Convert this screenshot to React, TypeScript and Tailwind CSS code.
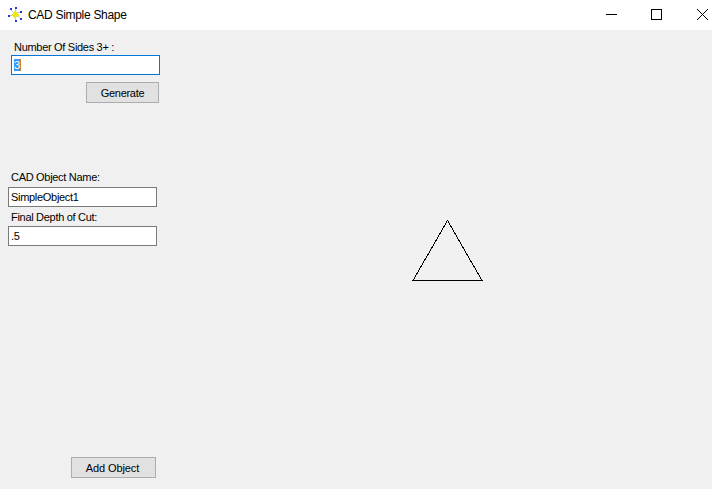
const Logo = () => (
  <svg width="16" height="16" viewBox="0 0 16 16" shapeRendering="crispEdges">
    <path d="M8 7 4 3M8 7l1-5M8 7l5-2M8 7 3 9M8 7l5 4M8 7l0 6" stroke="#c4c4d2" strokeWidth="1" />
    <rect x="6" y="5" width="5" height="5" fill="#e8e81a" />
    <rect x="7" y="4" width="2" height="7" fill="#e8e81a" />
    <rect x="5" y="7" width="7" height="2" fill="#e8e81a" />
    <rect x="3" y="1" width="2" height="2" fill="#2b35c9" />
    <rect x="8" y="0" width="2" height="2" fill="#2b35c9" />
    <rect x="13" y="4" width="2" height="2" fill="#2b35c9" />
    <rect x="1" y="8" width="2" height="2" fill="#2b35c9" />
    <rect x="13" y="11" width="2" height="2" fill="#2b35c9" />
    <rect x="8" y="13" width="2" height="2" fill="#2b35c9" />
  </svg>
);

const WindowIcons = () => (
  <svg width="106" height="12" viewBox="0 0 106 12" shapeRendering="crispEdges">
    <path d="M0 5.5H11" stroke="#000" strokeWidth="1" />
    <rect x="45.5" y="0.5" width="10" height="10" fill="none" stroke="#000" strokeWidth="1" />
    <path d="M91 0 102 11M102 0 91 11" stroke="#000" strokeWidth="1" shapeRendering="auto" />
  </svg>
);

const Field = ({ value }: { value: string }) => (
  <div className="ml-2 h-5 w-[149px] border border-[#7a7a7a] bg-white pl-[2px] leading-[18px] text-black">{value}</div>
);

export default function App() {
  return (
    <div className="flex h-[489px] w-[712px] flex-col overflow-hidden bg-[#f0f0f0] font-['Liberation_Sans',sans-serif] text-[11px] tracking-[-0.3px] text-black">
      <header className="flex h-[30px] items-center bg-white">
        <div className="ml-[7px] mr-[5px]">
          <Logo />
        </div>
        <span className="text-[12px]">CAD Simple Shape</span>
        <div className="ml-auto flex items-center">
          <WindowIcons />
        </div>
      </header>

      <main className="flex flex-1">
        <aside className="flex w-[170px] flex-col">
          <label className="ml-[14px] mt-[10px] h-[15px] leading-[15px]">Number Of Sides 3+ :</label>
          <div className="ml-[11px] flex h-5 w-[149px] items-center border border-[#0078d7] bg-white pl-[2px]">
            <span className="flex h-3 w-[7px] items-center justify-center border-r border-[#d9822b] bg-[#3399ff] text-white">3</span>
          </div>
          <button className="ml-[86px] mt-[7px] h-[21px] w-[73px] border border-[#adadad] bg-[#e1e1e1] pt-px">Generate</button>
          <label className="ml-[11px] mt-[67px] h-[17px] leading-[15px]">CAD Object Name:</label>
          <Field value="SimpleObject1" />
          <label className="ml-[11px] mt-[2px] h-[17px] leading-[17px]">Final Depth of Cut:</label>
          <Field value=".5" />
          <button className="ml-[71px] mt-[211px] h-[21px] w-[85px] border border-[#adadad] bg-[#e1e1e1] pt-px pr-[2px] tracking-[-0.1px]">Add Object</button>
        </aside>
        <section className="flex-1 pl-[242px] pt-[190px]">
          <svg width="72" height="62" viewBox="0 0 72 62" shapeRendering="crispEdges">
            <path d="M35.5 0.5 1 60.5H70Z" fill="none" stroke="#000" strokeWidth="1" />
          </svg>
        </section>
      </main>
    </div>
  );
}
